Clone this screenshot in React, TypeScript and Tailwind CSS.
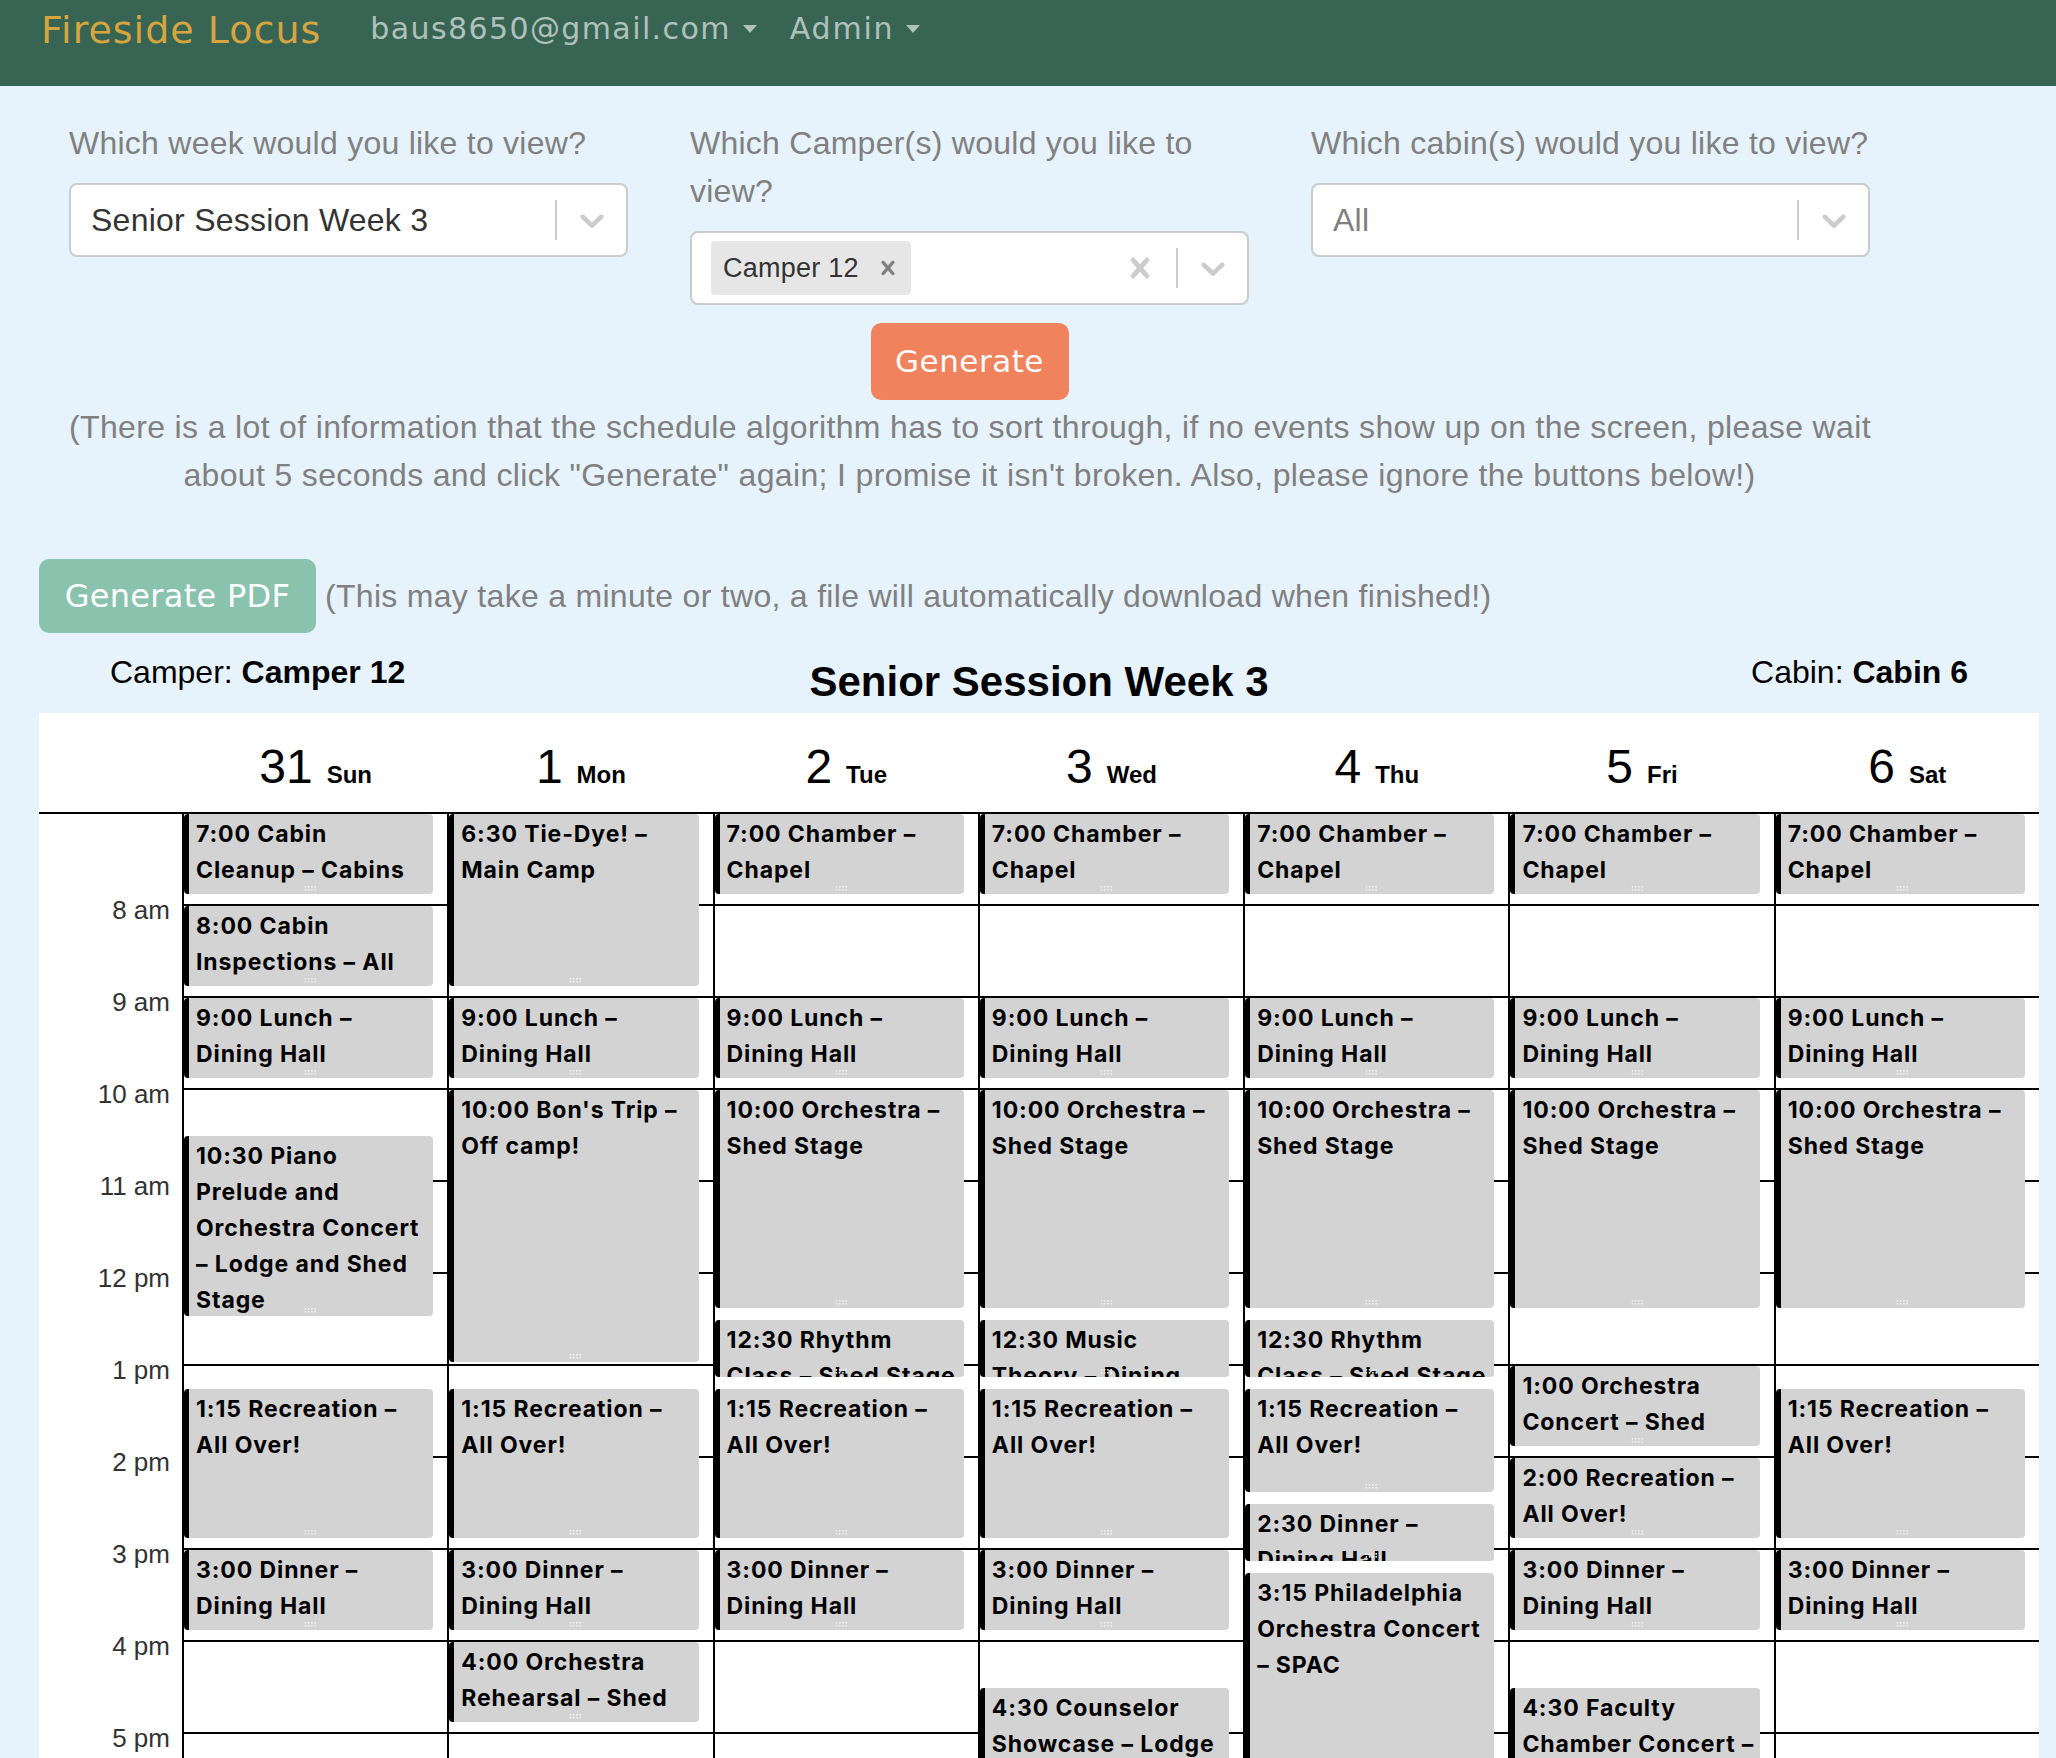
import React from "react";

const HOUR = 92;
const START = 420;

type Ev = { s: number; e: number; lines: string[] };

const chamber: Ev = { s: 420, e: 480, lines: ["7:00 Chamber –", "Chapel"] };
const lunch: Ev = { s: 540, e: 600, lines: ["9:00 Lunch –", "Dining Hall"] };
const orchestra: Ev = { s: 600, e: 750, lines: ["10:00 Orchestra –", "Shed Stage"] };
const rec: Ev = { s: 795, e: 900, lines: ["1:15 Recreation –", "All Over!"] };
const dinner: Ev = { s: 900, e: 960, lines: ["3:00 Dinner –", "Dining Hall"] };
const rhythm: Ev = { s: 750, e: 795, lines: ["12:30 Rhythm", "Class – Shed Stage"] };

const days: { num: string; name: string; events: Ev[] }[] = [
  {
    num: "31",
    name: "Sun",
    events: [
      { s: 420, e: 480, lines: ["7:00 Cabin", "Cleanup – Cabins"] },
      { s: 480, e: 540, lines: ["8:00 Cabin", "Inspections – All"] },
      lunch,
      {
        s: 630,
        e: 755,
        lines: ["10:30 Piano", "Prelude and", "Orchestra Concert", "– Lodge and Shed", "Stage"],
      },
      rec,
      dinner,
    ],
  },
  {
    num: "1",
    name: "Mon",
    events: [
      { s: 390, e: 540, lines: ["6:30 Tie-Dye! –", "Main Camp"] },
      lunch,
      { s: 600, e: 785, lines: ["10:00 Bon's Trip –", "Off camp!"] },
      rec,
      dinner,
      { s: 960, e: 1020, lines: ["4:00 Orchestra", "Rehearsal – Shed"] },
    ],
  },
  {
    num: "2",
    name: "Tue",
    events: [chamber, lunch, orchestra, rhythm, rec, dinner],
  },
  {
    num: "3",
    name: "Wed",
    events: [
      chamber,
      lunch,
      orchestra,
      { s: 750, e: 795, lines: ["12:30 Music", "Theory – Dining", "Hall"] },
      rec,
      dinner,
      { s: 990, e: 1110, lines: ["4:30 Counselor", "Showcase – Lodge"] },
    ],
  },
  {
    num: "4",
    name: "Thu",
    events: [
      chamber,
      lunch,
      orchestra,
      rhythm,
      { s: 795, e: 870, lines: ["1:15 Recreation –", "All Over!"] },
      { s: 870, e: 915, lines: ["2:30 Dinner –", "Dining Hall"] },
      { s: 915, e: 1140, lines: ["3:15 Philadelphia", "Orchestra Concert", "– SPAC"] },
    ],
  },
  {
    num: "5",
    name: "Fri",
    events: [
      chamber,
      lunch,
      orchestra,
      { s: 780, e: 840, lines: ["1:00 Orchestra", "Concert – Shed", "Stage"] },
      { s: 840, e: 900, lines: ["2:00 Recreation –", "All Over!"] },
      dinner,
      { s: 990, e: 1110, lines: ["4:30 Faculty", "Chamber Concert –", "Lodge"] },
    ],
  },
  {
    num: "6",
    name: "Sat",
    events: [chamber, lunch, orchestra, rec, dinner],
  },
];

const hourLabels = ["8 am", "9 am", "10 am", "11 am", "12 pm", "1 pm", "2 pm", "3 pm", "4 pm", "5 pm", "6 pm"];

const CHEVRON =
  "M4.516 7.548c0.436-0.446 1.043-0.481 1.576 0l3.908 3.747 3.908-3.747c0.533-0.481 1.141-0.446 1.574 0 0.436 0.445 0.408 1.197 0 1.615-0.406 0.418-4.695 4.502-4.695 4.502-0.217 0.223-0.502 0.335-0.787 0.335s-0.57-0.112-0.789-0.335c0 0-4.287-4.084-4.695-4.502s-0.436-1.17 0-1.615z";
const CROSS =
  "M14.348 14.849c-0.469 0.469-1.229 0.469-1.697 0l-2.651-3.030-2.651 3.029c-0.469 0.469-1.229 0.469-1.697 0-0.469-0.469-0.469-1.229 0-1.697l2.758-3.15-2.759-3.152c-0.469-0.469-0.469-1.228 0-1.697s1.228-0.469 1.697 0l2.652 3.031 2.651-3.031c0.469-0.469 1.228-0.469 1.697 0s0.469 1.229 0 1.697l-2.758 3.152 2.758 3.15c0.469 0.469 0.469 1.229 0 1.698z";

function Icon({ d, size, color }: { d: string; size: number; color: string }) {
  return (
    <svg width={size} height={size} viewBox="0 0 20 20" fill={color}>
      <path d={d} />
    </svg>
  );
}

function Indicators({ clear }: { clear?: boolean }) {
  return (
    <div className="flex h-full items-center">
      {clear && (
        <div className="flex items-center px-[16px]">
          <Icon d={CROSS} size={40} color="#cccccc" />
        </div>
      )}
      <div className="h-[40px] w-[2px] bg-[#cccccc]" />
      <div className="flex items-center pl-[15px] pr-[14px]">
        <Icon d={CHEVRON} size={40} color="#cccccc" />
      </div>
    </div>
  );
}

function Grip() {
  const dots = [];
  for (let r = 0; r < 2; r++) {
    for (let c = 0; c < 4; c++) {
      dots.push(<rect key={`${r}-${c}`} x={c * 3.3} y={r * 3} width="1.6" height="1.6" fill="#f1f1f1" />);
    }
  }
  return (
    <svg className="absolute bottom-[3px] left-1/2 -translate-x-1/2" width="13" height="5" viewBox="0 0 13 5">
      {dots}
    </svg>
  );
}

function EventBox({ ev }: { ev: Ev }) {
  const s = Math.max(ev.s, START);
  const top = ((s - START) * HOUR) / 60;
  const height = ((ev.e - s) * HOUR) / 60 - 12;
  return (
    <div
      className="absolute left-0 right-[14px] overflow-hidden rounded-[4px] border-l-[5px] border-black bg-[#d3d3d3] pl-[7px] pt-[2px]"
      style={{ top, height }}
    >
      {ev.lines.map((l, i) => (
        <div
          key={i}
          className="whitespace-nowrap font-['Inter',sans-serif] text-[23px] font-bold leading-[36px] tracking-[0.9px] text-black"
        >
          {l}
        </div>
      ))}
      <Grip />
    </div>
  );
}

function Caret() {
  return <span className="ml-[12px] inline-block h-0 w-0 border-l-[7px] border-r-[7px] border-t-[8px] border-l-transparent border-r-transparent border-t-[#afc1ba]" />;
}

export default function App() {
  return (
    <div className="min-h-screen bg-[#e6f3fd] font-['Liberation_Sans',Arial,sans-serif] tracking-[0.25px]">
      {/* Navbar */}
      <nav className="flex h-[86px] items-start bg-[#386453] pl-[41px] font-['DejaVu_Sans',sans-serif]">
        <span className="mt-[6px] text-[38px] leading-[48px] tracking-[1px] text-[#d6a540]">Fireside Locus</span>
        <span className="ml-[49px] mt-[9px] flex items-center text-[30px] leading-[40px] tracking-[1.4px] text-[#afc1ba]">
          baus8650@gmail.com
          <Caret />
        </span>
        <span className="ml-[33px] mt-[9px] flex items-center text-[30px] leading-[40px] tracking-[1.8px] text-[#afc1ba]">
          Admin
          <Caret />
        </span>
      </nav>

      {/* Form */}
      <div className="ml-[69px] w-[1801px] pt-[33px]">
        <div className="grid grid-cols-3 gap-x-[62px]">
          <div>
            <div className="mb-[16px] whitespace-nowrap text-[32px] leading-[48px] text-[#808080]">
              Which week would you like to view?
            </div>
            <div className="flex h-[74px] items-center rounded-[8px] border-2 border-[#cccccc] bg-white">
              <div className="flex-1 pl-[20px] text-[32px] text-[#333333]">Senior Session Week 3</div>
              <Indicators />
            </div>
          </div>
          <div>
            <div className="mb-[16px] text-[32px] leading-[48px] text-[#808080]">
              Which Camper(s) would you like to view?
            </div>
            <div className="flex h-[74px] items-center rounded-[8px] border-2 border-[#cccccc] bg-white">
              <div className="flex flex-1 items-center pl-[19px]">
                <div className="flex h-[54px] items-center rounded-[4px] bg-[#e6e6e6]">
                  <span className="pl-[12px] pr-[6px] text-[27px] text-[#333333]">Camper 12</span>
                  <span className="flex items-center px-[9px]">
                    <Icon d={CROSS} size={28} color="#808080" />
                  </span>
                </div>
              </div>
              <Indicators clear />
            </div>
          </div>
          <div>
            <div className="mb-[16px] whitespace-nowrap text-[32px] leading-[48px] text-[#808080]">
              Which cabin(s) would you like to view?
            </div>
            <div className="flex h-[74px] items-center rounded-[8px] border-2 border-[#cccccc] bg-white">
              <div className="flex-1 pl-[20px] text-[32px] text-[#808080]">All</div>
              <Indicators />
            </div>
          </div>
        </div>

        <div className="mt-[18px] flex justify-center">
          <button className="flex h-[77px] w-[198px] items-center justify-center rounded-[10px] bg-[#f0835e] font-['DejaVu_Sans',sans-serif] text-[31px] tracking-[0.5px] text-white">
            Generate
          </button>
        </div>

        <div className="mt-[3px] text-center text-[32px] leading-[48px] tracking-[0.35px] text-[#808080]">
          <div className="whitespace-nowrap">
            (There is a lot of information that the schedule algorithm has to sort through, if no events show up on the screen, please wait
          </div>
          <div className="whitespace-nowrap">
            about 5 seconds and click "Generate" again; I promise it isn't broken. Also, please ignore the buttons below!)
          </div>
        </div>
      </div>

      {/* PDF row */}
      <div className="ml-[39px] mt-[60px] flex items-center">
        <button className="flex h-[74px] w-[277px] items-center justify-center rounded-[10px] bg-[#89c3ae] font-['DejaVu_Sans',sans-serif] text-[32px] tracking-[0.3px] text-white">
          Generate PDF
        </button>
        <span className="ml-[9px] text-[32px] leading-[48px] tracking-[0.3px] text-[#808080]">
          (This may take a minute or two, a file will automatically download when finished!)
        </span>
      </div>

      {/* Title row */}
      <div className="ml-[39px] grid h-[80px] w-[2000px] grid-cols-[1fr_auto_1fr] items-start tracking-normal">
        <div className="mt-[15px] pl-[71px] text-[32px] leading-[48px] text-black">
          Camper: <b>Camper 12</b>
        </div>
        <div className="mt-[24px] text-[42px] font-bold leading-[50px] text-black">Senior Session Week 3</div>
        <div className="mt-[15px] pr-[71px] text-right text-[32px] leading-[48px] text-black">
          Cabin: <b>Cabin 6</b>
        </div>
      </div>

      {/* Calendar */}
      <div className="ml-[39px] w-[2000px] bg-white tracking-normal">
        <div className="flex h-[101px] border-b-2 border-black">
          <div className="w-[143px]" />
          {days.map((d) => (
            <div key={d.num} className="flex flex-1 items-baseline justify-center gap-[14px] pl-[2px] pt-[30px]">
              <span className="text-[48px] leading-[48px] text-black">{d.num}</span>
              <span className="text-[24px] font-bold text-black">{d.name}</span>
            </div>
          ))}
        </div>
        <div className="flex h-[1012px] overflow-hidden">
          <div className="w-[143px] pt-[83px]">
            {hourLabels.map((h) => (
              <div key={h} className="h-[92px] pr-[12px] text-right text-[26px] leading-[26px] text-[#333333]">
                {h}
              </div>
            ))}
          </div>
          {days.map((d) => (
            <div key={d.num} className="relative flex-1 border-l-2 border-black">
              {Array.from({ length: 11 }).map((_, i) => (
                <div key={i} className="h-[92px] border-b-2 border-black" />
              ))}
              {d.events.map((ev, i) => (
                <EventBox key={i} ev={ev} />
              ))}
            </div>
          ))}
        </div>
      </div>
    </div>
  );
}
